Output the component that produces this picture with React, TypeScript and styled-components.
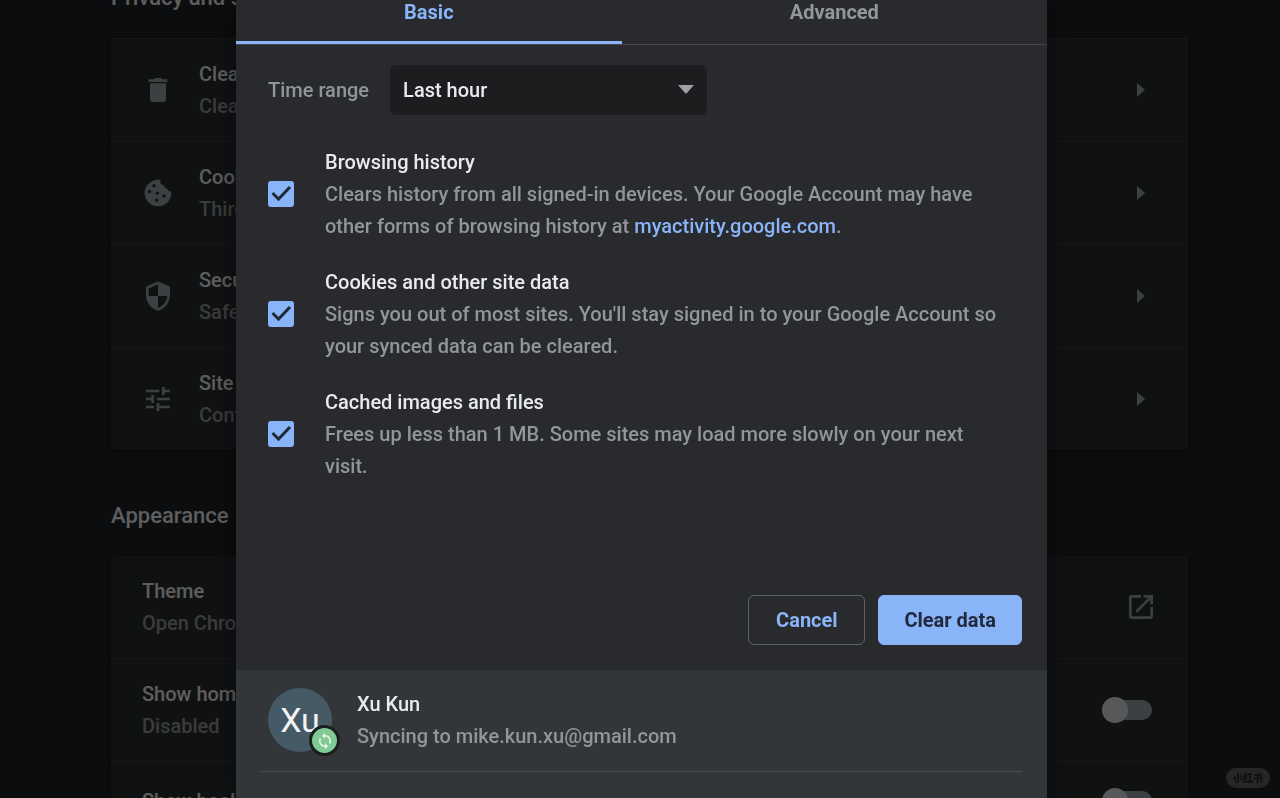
import React from "react";
import styled, { createGlobalStyle } from "styled-components";
import { MdDelete, MdSecurity, MdTune, MdOpenInNew, MdSync } from "react-icons/md";

const Global = createGlobalStyle`
  * { box-sizing: border-box; }
  html, body { margin: 0; background: #202124; }
  body {
    height: 100vh;
    overflow: hidden;
    font-family: Roboto, "Liberation Sans", sans-serif;
    font-size: 20px;
    font-weight: 500;
    line-height: 32px;
    color: #e8eaed;
  }
`;

const Page = styled.main`
  height: 100vh;
  overflow: hidden;
  padding: 0 92px 0 111px;
`;

const SectionTitle = styled.h2<{ $scrolled?: boolean }>`
  margin: ${(p) => (p.$scrolled ? "-18px 0 24px" : "50px 0 24px")};
  font-size: 22px;
  line-height: 32px;
  font-weight: 500;
`;

const Card = styled.div`
  background: #292d2f;
  border-radius: 4px;
  box-shadow: 0 1px 3px rgba(0, 0, 0, 0.5);
`;

const Row = styled.div<{ $line?: boolean; $single?: boolean }>`
  display: flex;
  align-items: center;
  height: ${(p) => (p.$single ? 78 : p.$line ? 103 : 102)}px;
  padding: 0 31px;
  border-top: ${(p) => (p.$line ? "1px solid #383b3d" : "0")};
`;

const RowIcon = styled.span`
  display: flex;
  width: 32px;
  height: 32px;
  margin-right: 25px;
  color: #9aa0a6;
`;

const RowText = styled.div`
  flex: 1;
  min-width: 0;
`;

const Primary = styled.div`
  color: #e8eaed;
`;

const Secondary = styled.div`
  color: #92959a;
`;

const IconButton = styled.button`
  display: flex;
  align-items: center;
  justify-content: center;
  width: 32px;
  height: 32px;
  padding: 0;
  border: 0;
  background: none;
  color: #9aa0a6;
`;

const Switch = styled.input`
  appearance: none;
  isolation: isolate;
  display: flex;
  align-items: center;
  width: 50px;
  height: 26px;
  margin: 0 5px 0 0;
  &::before {
    content: "";
    width: 26px;
    height: 26px;
    border-radius: 13px;
    background: #dadce0;
    z-index: 1;
  }
  &::after {
    content: "";
    width: 37px;
    height: 20px;
    margin-left: -13px;
    border-radius: 10px;
    background: #9aa0a6;
  }
`;

const Backdrop = styled.div`
  position: fixed;
  inset: 0;
  display: flex;
  padding: 0 233px 0 236px;
  background: rgba(0, 0, 0, 0.6);
  overflow: hidden;
`;

const Dialog = styled.section`
  flex: 1;
  display: flex;
  flex-direction: column;
  min-width: 0;
  background: #292a2d;
  box-shadow: 0 0 24px rgba(0, 0, 0, 0.5);
`;

const Tabs = styled.div`
  display: flex;
  height: 45px;
  flex: none;
  border-bottom: 1px solid #45474a;
`;

const Tab = styled.button<{ $active?: boolean }>`
  flex: 1 1 auto;
  padding: 0 0 18px;
  border: 0;
  border-bottom: 3px solid ${(p) => (p.$active ? "#8ab4f8" : "transparent")};
  background: none;
  color: ${(p) => (p.$active ? "#8ab4f8" : "#92959a")};
  font: 700 20px/24px Roboto, sans-serif;
`;

const Body = styled.div`
  flex: none;
  display: flex;
  flex-direction: column;
  padding: 20px 40px 0 32px;
`;

const RangeRow = styled.div`
  display: flex;
  align-items: center;
  gap: 21px;
  margin-bottom: 31px;
  color: #92959a;
`;

const SelectBox = styled.div`
  position: relative;
  width: 317px;
  svg {
    position: absolute;
    right: 13px;
    top: 20px;
    pointer-events: none;
  }
`;

const Select = styled.select`
  appearance: none;
  width: 100%;
  height: 50px;
  padding: 0 13px;
  border: 0;
  border-radius: 6px;
  background: #1d1d1f;
  color: #e8eaed;
  font: 500 20px/32px Roboto, sans-serif;
`;

const Option = styled.div`
  display: flex;
  align-items: center;
  gap: 31px;
  margin-bottom: 24px;
`;

const CheckBox = styled.span`
  flex: none;
  display: grid;
  width: 26px;
  height: 26px;
  input, svg { grid-area: 1 / 1; }
  input {
    appearance: none;
    width: 26px;
    height: 26px;
    margin: 0;
    border-radius: 3px;
    background: #8ab4f8;
  }
  svg { pointer-events: none; }
`;

const OptionTitle = styled.label`
  display: block;
  color: #e8eaed;
`;

const Link = styled.a`
  color: #8ab4f8;
  text-decoration: none;
`;

const Actions = styled.div`
  flex: none;
  display: flex;
  justify-content: flex-end;
  gap: 13px;
  padding: 89px 25px 25px;
`;

const Button = styled.button<{ $primary?: boolean }>`
  min-width: 117px;
  height: 50px;
  padding: 0 25px;
  border: 1px solid ${(p) => (p.$primary ? "#8ab4f8" : "#5f6368")};
  border-radius: 6px;
  background: ${(p) => (p.$primary ? "#8ab4f8" : "transparent")};
  color: ${(p) => (p.$primary ? "#202a3c" : "#8ab4f8")};
  font: 700 20px/32px Roboto, sans-serif;
`;

const Footer = styled.footer`
  flex: 1 0 auto;
  padding: 18px 25px 0;
  background: #323639;
`;

const Account = styled.div`
  display: flex;
  align-items: center;
  gap: 25px;
  padding: 0 7px 19px;
  border-bottom: 1px solid #4b4f51;
`;

const Avatar = styled.div`
  position: relative;
  display: flex;
  align-items: center;
  justify-content: center;
  width: 64px;
  height: 64px;
  border-radius: 50%;
  background: #455a64;
  color: #f1f3f4;
  font-size: 34px;
  font-weight: 400;
`;

const Badge = styled.span`
  position: absolute;
  right: -8px;
  bottom: -4px;
  display: flex;
  align-items: center;
  justify-content: center;
  width: 31px;
  height: 31px;
  border: 3px solid #1c1d1f;
  border-radius: 50%;
  background: #81c995;
  color: #eaf7ee;
`;

const Watermark = styled.div`
  position: fixed;
  right: 10px;
  bottom: 10px;
  padding: 0 7px;
  border-radius: 10px;
  background: #262628;
  color: #0d0e0f;
  font: 900 10px/20px "Noto Sans CJK SC", sans-serif;
`;

const CookieIcon = () => (
  <svg width="32" height="32" viewBox="0 0 24 24" fill="currentColor" aria-hidden="true">
    <path
      fillRule="evenodd"
      d="M21.95 10.99c-1.5 0-2.6-.8-2.9-2.2-1.5 0-2.5-.9-2.4-2.4-1.9.1-3.2-1.3-2.9-3.3l.1-.95C7.11 1.2 2 6.41 2 12c0 5.52 4.48 10 10 10 5.89 0 10.54-5.08 9.95-11.01zM9 7.9a1.3 1.3 0 1 1 0-2.6 1.3 1.3 0 0 1 0 2.6zM5.6 12.1a1.3 1.3 0 1 1 0-2.6 1.3 1.3 0 0 1 0 2.6zM11.5 13.4a1.3 1.3 0 1 1 0-2.6 1.3 1.3 0 0 1 0 2.6zM16.5 15.6a1.3 1.3 0 1 1 0-2.6 1.3 1.3 0 0 1 0 2.6zM11 18.8a1.3 1.3 0 1 1 0-2.6 1.3 1.3 0 0 1 0 2.6z"
    />
  </svg>
);

const ArrowRight = () => (
  <svg width="8" height="14" viewBox="0 0 8 14" fill="currentColor" aria-hidden="true">
    <path d="M0 0l8 7-8 7z" />
  </svg>
);

const privacyRows = [
  { icon: <MdDelete size={32} />, title: "Clear browsing data", sub: "Clear history, cookies, cache, and more" },
  { icon: <CookieIcon />, title: "Cookies and other site data", sub: "Third-party cookies are blocked in Incognito mode" },
  { icon: <MdSecurity size={32} />, title: "Security", sub: "Safe Browsing and other security settings" },
  { icon: <MdTune size={32} />, title: "Site Settings", sub: "Controls what information sites can use and show" },
];

const options = [
  {
    id: "history",
    title: "Browsing history",
    text: (
      <>
        Clears history from all signed-in devices. Your Google Account may have other forms of browsing history at{" "}
        <Link href="#">myactivity.google.com</Link>.
      </>
    ),
  },
  {
    id: "cookies",
    title: "Cookies and other site data",
    text: "Signs you out of most sites. You'll stay signed in to your Google Account so your synced data can be cleared.",
  },
  {
    id: "cache",
    title: "Cached images and files",
    text: "Frees up less than 1 MB. Some sites may load more slowly on your next visit.",
  },
];

export default function App() {
  return (
    <>
      <Global />
      <Page>
        <SectionTitle $scrolled>Privacy and security</SectionTitle>
        <Card>
          {privacyRows.map((row) => (
            <Row key={row.title} $line>
              <RowIcon>{row.icon}</RowIcon>
              <RowText>
                <Primary>{row.title}</Primary>
                <Secondary>{row.sub}</Secondary>
              </RowText>
              <IconButton aria-label={row.title}>
                <ArrowRight />
              </IconButton>
            </Row>
          ))}
        </Card>
        <SectionTitle>Appearance</SectionTitle>
        <Card>
          <Row>
            <RowText>
              <Primary>Theme</Primary>
              <Secondary>Open Chrome Web Store</Secondary>
            </RowText>
            <IconButton aria-label="Theme">
              <MdOpenInNew size={32} />
            </IconButton>
          </Row>
          <Row $line>
            <RowText>
              <Primary as="label" htmlFor="home">Show home button</Primary>
              <Secondary>Disabled</Secondary>
            </RowText>
            <Switch type="checkbox" id="home" />
          </Row>
          <Row $line $single>
            <RowText>
              <Primary as="label" htmlFor="bookmarks">Show bookmarks bar</Primary>
            </RowText>
            <Switch type="checkbox" id="bookmarks" />
          </Row>
        </Card>
      </Page>
      <Backdrop>
        <Dialog role="dialog" aria-label="Clear browsing data">
          <Tabs role="tablist">
            <Tab role="tab" aria-selected="true" $active>Basic</Tab>
            <Tab role="tab" aria-selected="false">Advanced</Tab>
          </Tabs>
          <Body>
            <RangeRow>
              <label htmlFor="range">Time range</label>
              <SelectBox>
                <Select id="range" defaultValue="hour">
                  <option value="hour">Last hour</option>
                </Select>
                <svg width="16" height="9" viewBox="0 0 16 9" fill="#9aa0a6" aria-hidden="true">
                  <path d="M0 0h16l-8 9z" />
                </svg>
              </SelectBox>
            </RangeRow>
            {options.map((o) => (
              <Option key={o.id}>
                <CheckBox>
                  <input type="checkbox" id={o.id} defaultChecked />
                  <svg width="26" height="26" viewBox="0 0 26 26" fill="none" stroke="#202a3c" strokeWidth="3" aria-hidden="true">
                    <path d="M4.5 12l6 6L22 6" />
                  </svg>
                </CheckBox>
                <div>
                  <OptionTitle htmlFor={o.id}>{o.title}</OptionTitle>
                  <Secondary>{o.text}</Secondary>
                </div>
              </Option>
            ))}
          </Body>
          <Actions>
            <Button>Cancel</Button>
            <Button $primary>Clear data</Button>
          </Actions>
          <Footer>
            <Account>
              <Avatar>
                Xu
                <Badge>
                  <MdSync size={18} />
                </Badge>
              </Avatar>
              <div>
                <Primary>Xu Kun</Primary>
                <Secondary>Syncing to mike.kun.xu@gmail.com</Secondary>
              </div>
            </Account>
          </Footer>
        </Dialog>
      </Backdrop>
      <Watermark>小红书</Watermark>
    </>
  );
}
